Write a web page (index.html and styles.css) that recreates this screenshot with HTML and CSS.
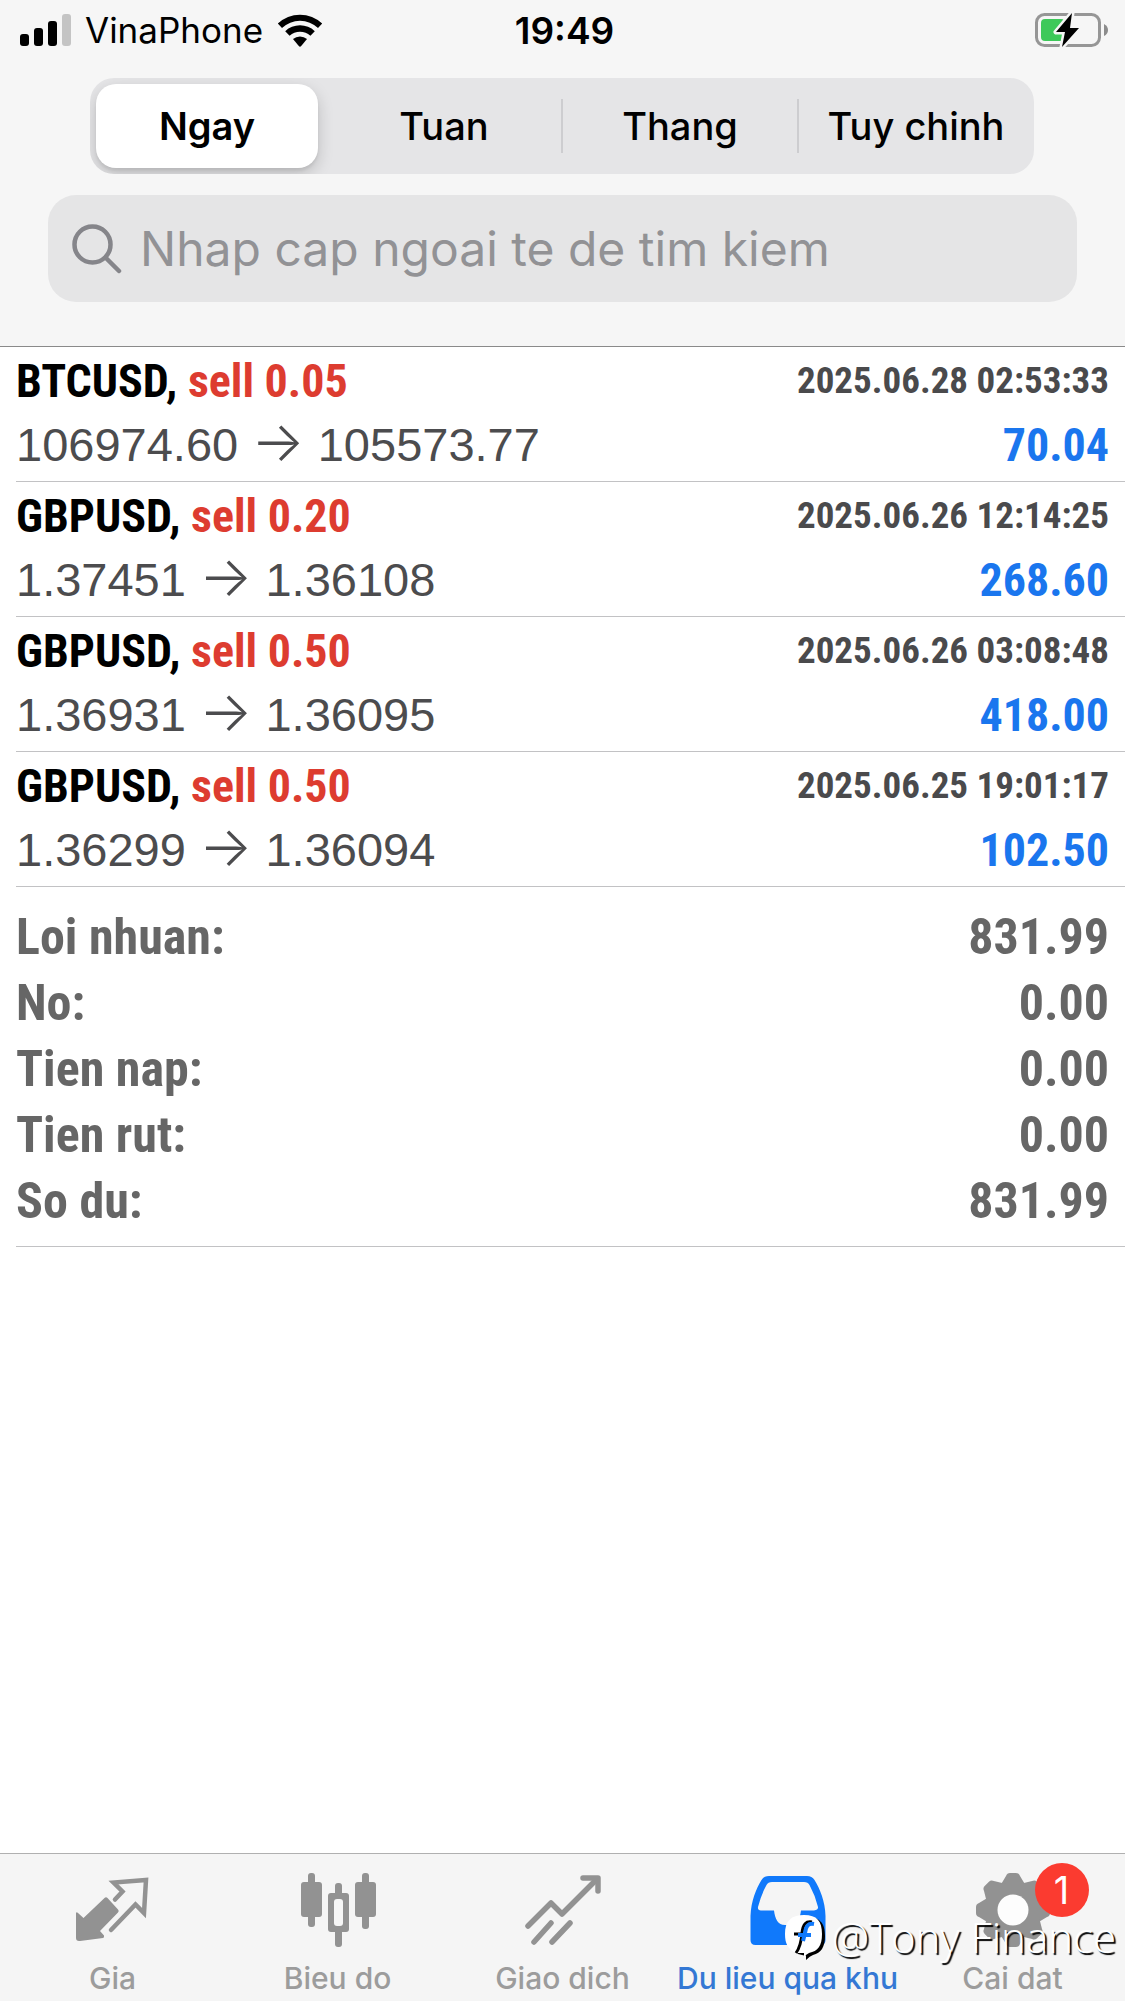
FILE: index.html
```html
<!DOCTYPE html>
<html lang="vi">
<head>
<meta charset="utf-8">
<meta name="viewport" content="width=device-width, initial-scale=1">
<title>Du lieu qua khu</title>
<link rel="stylesheet" href="styles.css">
</head>
<body>
<div class="app">
  <header class="header">
    <div class="status">
      <div class="status-left">
        <svg class="signal" viewBox="0 0 51 32" aria-hidden="true">
          <rect x="0" y="20" width="9" height="12" rx="3"/>
          <rect x="14" y="14" width="9" height="18" rx="3"/>
          <rect x="28" y="7" width="9" height="25" rx="3"/>
          <rect x="42" y="0" width="9" height="32" rx="3" fill="#c4c4c4"/>
        </svg>
        <span>VinaPhone</span>
        <svg class="wifi" viewBox="0 0 46 33" aria-hidden="true">
          <path d="M0.8 9.6 A32 32 0 0 1 45.2 9.6 L41 14 A26 26 0 0 0 5 14 Z"/>
          <path d="M8.2 17.2 A21.5 21.5 0 0 1 37.8 17.2 L33.4 21.8 A15.300 15.300 0 0 0 12.600 21.800 Z"/>
          <path d="M16 25 A11 11 0 0 1 30 25 L24.200 32 Q23 33.400 21.800 32 Z"/>
        </svg>
      </div>
      <time class="clock">19:49</time>
      <div class="status-right">
        <svg class="battery" viewBox="0 0 74 36" aria-hidden="true">
          <rect x="1.500" y="2.500" width="63" height="31" rx="8" fill="none" stroke="#969696" stroke-width="3"/>
          <path d="M69 12 Q73 14 73 18 Q73 22 69 24 Z" fill="#8c8c8c"/>
          <rect x="6" y="7" width="24" height="22" rx="4" fill="#3ec95a"/>
          <path d="M37 1 L21 20 H30 L27 35 L44 16 H35 Z" fill="#000" stroke="#f6f6f6" stroke-width="5" stroke-linejoin="round" paint-order="stroke"/>
        </svg>
      </div>
    </div>
    <div class="segments" role="group" aria-label="Ngay">
      <button class="segment is-active" type="button">Ngay</button>
      <button class="segment" type="button">Tuan</button>
      <button class="segment" type="button">Thang</button>
      <button class="segment" type="button">Tuy chinh</button>
    </div>
    <label class="search">
      <svg class="search-icon" viewBox="0 0 50 50" fill="none" stroke="#85858a" stroke-width="4.500" stroke-linecap="round" aria-hidden="true">
        <circle cx="20.500" cy="20.500" r="18"/>
        <path d="M34 34 L47 47"/>
      </svg>
      <input class="search-input" type="search" placeholder="Nhap cap ngoai te de tim kiem" aria-label="Nhap cap ngoai te de tim kiem">
    </label>
  </header>

  <main class="content">
    <ul class="deals">
      <li class="deal">
        <div class="deal-line"><span class="symbol">BTCUSD, <span class="side">sell 0.05</span></span><time class="date">2025.06.28 02:53:33</time></div>
        <div class="deal-line"><span class="prices">106974.60 <span class="arrow">→</span> 105573.77</span><span class="profit">70.04</span></div>
      </li>
      <li class="deal">
        <div class="deal-line"><span class="symbol">GBPUSD, <span class="side">sell 0.20</span></span><time class="date">2025.06.26 12:14:25</time></div>
        <div class="deal-line"><span class="prices">1.37451 <span class="arrow">→</span> 1.36108</span><span class="profit">268.60</span></div>
      </li>
      <li class="deal">
        <div class="deal-line"><span class="symbol">GBPUSD, <span class="side">sell 0.50</span></span><time class="date">2025.06.26 03:08:48</time></div>
        <div class="deal-line"><span class="prices">1.36931 <span class="arrow">→</span> 1.36095</span><span class="profit">418.00</span></div>
      </li>
      <li class="deal">
        <div class="deal-line"><span class="symbol">GBPUSD, <span class="side">sell 0.50</span></span><time class="date">2025.06.25 19:01:17</time></div>
        <div class="deal-line"><span class="prices">1.36299 <span class="arrow">→</span> 1.36094</span><span class="profit">102.50</span></div>
      </li>
    </ul>
    <dl class="summary">
      <div class="summary-row"><dt>Loi nhuan:</dt><dd>831.99</dd></div>
      <div class="summary-row"><dt>No:</dt><dd>0.00</dd></div>
      <div class="summary-row"><dt>Tien nap:</dt><dd>0.00</dd></div>
      <div class="summary-row"><dt>Tien rut:</dt><dd>0.00</dd></div>
      <div class="summary-row"><dt>So du:</dt><dd>831.99</dd></div>
    </dl>
  </main>

  <nav class="tabs">
    <a class="tab" href="#gia">
      <svg class="tab-icon" viewBox="0 0 76 76" aria-hidden="true">
        <path d="M29.500 26 Q31 24.500 32.500 26 L43 37.500 Q44.500 39 43 40.500 L25 59 L29 63.500 Q29.500 65.500 28 66 L5 69 Q1 69.500 1 66 L1 41 Q1.500 39.500 3 41 L8.500 46 Z" fill="#929292"/>
        <path d="M40 27.500 L47.500 19.500 L38.500 10.500 L71 8 L69 41 L60.500 32.500 L36 58" fill="none" stroke="#929292" stroke-width="4.500" stroke-linecap="round"/>
      </svg>
      <span>Gia</span>
    </a>
    <a class="tab" href="#bieu-do">
      <svg class="tab-icon" viewBox="0 0 76 76" fill="#929292" aria-hidden="true">
        <rect x="8" y="1" width="7" height="54" rx="3"/><rect x="1" y="10" width="21" height="35" rx="3"/>
        <rect x="35" y="11" width="7" height="64" rx="3"/><rect x="28" y="21" width="21" height="39" rx="3"/><rect x="34" y="27" width="9" height="27" rx="3" fill="#f6f6f6"/>
        <rect x="62" y="1" width="7" height="56" rx="3"/><rect x="55" y="10" width="21" height="35" rx="3"/>
      </svg>
      <span>Bieu do</span>
    </a>
    <a class="tab" href="#giao-dich">
      <svg class="tab-icon" viewBox="0 0 76 76" fill="none" stroke="#929292" stroke-width="5.500" stroke-linecap="round" stroke-linejoin="round" aria-hidden="true">
        <path d="M3 54 L26 31 L37 42 L72 7"/>
        <path d="M58 6 H73 V19"/>
        <path d="M9 70 L26 51 M27 70 L45 51"/>
      </svg>
      <span>Giao dich</span>
    </a>
    <a class="tab is-current" href="#du-lieu-qua-khu">
      <svg class="tab-icon" viewBox="0 0 76 76" aria-hidden="true">
        <path fill="#1079fb" fill-rule="evenodd" d="M19 4 H57 Q62 4 64.500 8 C70 17 75 29 75.500 44 V68 Q75.500 73 70.500 73 H5.500 Q.5 73 .5 68 V44 C1 29 6 17 11.500 8 Q14 4 19 4 Z M22 10 Q18 10 16.500 13 Q11 23 8 35 Q7.500 38.500 11 38.500 H24 C25 47 28 53 35 53 H41 C47 52 50 47 51 38.500 H64 Q68.500 38 68 35 Q65 23 59.500 13 Q58 10 54 10 Z"/>
      </svg>
      <span>Du lieu qua khu</span>
    </a>
    <a class="tab" href="#cai-dat">
      <span class="icon-wrap">
        <svg class="tab-icon" viewBox="0 0 76 76" aria-hidden="true">
          <g fill="#929292">
            <circle cx="38" cy="38" r="29"/>
            <path id="tooth" d="M25 14 L31 4 Q32 1 35 1 H41 Q44 1 45 4 L51 14 Z"/>
            <use href="#tooth" transform="rotate(45 38 38)"/><use href="#tooth" transform="rotate(90 38 38)"/><use href="#tooth" transform="rotate(135 38 38)"/><use href="#tooth" transform="rotate(180 38 38)"/><use href="#tooth" transform="rotate(225 38 38)"/><use href="#tooth" transform="rotate(270 38 38)"/><use href="#tooth" transform="rotate(315 38 38)"/>
          </g>
          <circle cx="38" cy="38" r="15.500" fill="#fdfdfd"/>
        </svg>
        <span class="badge">1</span>
      </span>
      <span>Cai dat</span>
    </a>
    <div class="watermark">
      <svg class="watermark-logo" viewBox="0 0 42 46" aria-hidden="true">
        <path d="M22 3 C36 3 41 9 41 22 C41 33 37 39 29 41 Q26 42 22 46 V42 L14 40 L3 22 Z" fill="#000"/>
        <path d="M20 1 C33 1 38 7 38 20 C38 32 34 37 25 39 Q22 40 20 44 V39 L12 39 C4 35 1 30 1 20 C1 7 7 1 20 1 Z" fill="#fff"/>
        <path d="M28 8 C22 7 19 10 18 19 Q17 32 12 39" fill="none" stroke="#000" stroke-width="3"/>
        <path d="M10 20 H18" stroke="#000" stroke-width="3"/>
        <path d="M30 10 C24 9 22 12 21 19 L19 27 M14 21 H27" fill="none" stroke="#1079fb" stroke-width="4"/>
      </svg>
      <span>@Tony Finance</span>
    </div>
  </nav>
</div>
</body>
</html>
```
FILE: styles.css
```css
* { box-sizing: border-box; }

body {
  margin: 0;
  background: #fff;
  color: #000;
  font-family: Inter, "Liberation Sans", sans-serif;
}

.app {
  display: flex;
  flex-direction: column;
  min-height: 100vh;
}

/* Header */
.header {
  background: #f6f6f6;
  border-bottom: 1px solid #8a8a8a;
  padding-bottom: 44px;
}

.status {
  display: grid;
  grid-template-columns: 1fr auto 1fr;
  align-items: center;
  height: 60px;
  padding: 0 16px 0 20px;
  margin-bottom: 18px;
  font-size: 35px;
}

.status-left { display: flex; align-items: center; gap: 14px; }
.status-right { display: flex; justify-content: flex-end; }
.signal { width: 51px; height: 32px; }
.wifi { width: 46px; height: 33px; }
.battery { width: 74px; height: 36px; }
.clock { font-size: 37px; font-weight: 600; }

.segments {
  display: grid;
  grid-template-columns: repeat(4, 1fr);
  height: 96px;
  margin: 0 91px 21px 90px;
  border-radius: 24px;
  background: #e5e5e7;
  overflow: hidden;
}

.segment {
  position: relative;
  padding: 0;
  border: 0;
  background: none;
  font: 450 38px Inter, "Liberation Sans", sans-serif;
  color: #000;
}

.segment.is-active {
  margin: 6px 8px 6px 6px;
  border-radius: 20px;
  background: #fff;
  font-weight: 600;
  box-shadow: 0 6px 16px rgba(0, 0, 0, 0.18), 0 3px 3px rgba(0, 0, 0, 0.06);
}

.segment:nth-child(n + 3)::before {
  content: "";
  position: absolute;
  left: -1px;
  top: 21px;
  bottom: 21px;
  width: 2px;
  background: #cdcdd0;
}

.search {
  display: flex;
  align-items: center;
  gap: 18px;
  height: 107px;
  margin: 0 48px;
  padding: 0 24px;
  border-radius: 28px;
  background: #e5e5e6;
}

.search-icon { flex: none; width: 50px; height: 50px; }

.search-input {
  flex: 1;
  min-width: 0;
  padding: 0;
  border: 0;
  outline: 0;
  background: none;
  font: 400 48px Inter, "Liberation Sans", sans-serif;
  color: #000;
}
.search-input::placeholder { color: #929295; opacity: 1; }

/* Deals */
.content { flex: 1; padding-left: 16px; }

.deals { margin: 0; padding: 0; list-style: none; }

.deal {
  height: 135px;
  padding-right: 16px;
  border-bottom: 1px solid #c2c2c4;
}

.deal-line {
  display: flex;
  justify-content: space-between;
  height: 64px;
  line-height: 68px;
  white-space: nowrap;
}

.symbol, .date, .profit, .summary {
  font-family: "Roboto Condensed", Roboto, "Liberation Sans", sans-serif;
  font-weight: 700;
}

.symbol { font-size: 46px; }
.side { color: #dd3c30; }
.date { font-size: 37px; color: #4a4a4c; }
.prices { font-family: "Liberation Sans", sans-serif; font-size: 47px; color: #4c4c4e; }
.arrow { font-family: Inter, sans-serif; font-size: 56px; font-weight: 300; line-height: 1px; }
.profit { font-size: 46px; color: #1a76ee; }

.summary {
  margin: 0;
  padding: 17px 16px 12px 0;
  border-bottom: 1px solid #c2c2c4;
  font-size: 50px;
  color: #666;
}

.summary-row {
  display: flex;
  justify-content: space-between;
  height: 66px;
  line-height: 66px;
}
.summary dd { margin: 0; }

/* Tab bar */
.tabs {
  position: relative;
  display: grid;
  grid-template-columns: repeat(5, 1fr);
  height: 148px;
  border-top: 1px solid #b0b0b0;
  background: #f5f5f5;
}

.tab {
  display: flex;
  flex-direction: column;
  align-items: center;
  gap: 12px;
  padding-top: 18px;
  font-size: 30px;
  font-weight: 500;
  line-height: 36px;
  white-space: nowrap;
  color: #9c9c9c;
  text-decoration: none;
}
.tab.is-current { color: #3478d4; }

.tab-icon { display: block; width: 76px; height: 76px; }
.icon-wrap { position: relative; }

.badge {
  position: absolute;
  left: 60px;
  top: -9px;
  width: 54px;
  height: 54px;
  border-radius: 50%;
  background: #fb3b30;
  color: #fff;
  font-size: 38px;
  font-weight: 400;
  line-height: 54px;
  text-align: center;
}

.watermark {
  position: absolute;
  right: 9px;
  bottom: 36px;
  display: flex;
  align-items: center;
  gap: 6px;
  color: #fff;
  font: 300 42px/56px "Open Sans", "Noto Sans", sans-serif;
  text-shadow: 2px 2px 1px #000;
}
.watermark-logo { width: 42px; height: 46px; }
```
